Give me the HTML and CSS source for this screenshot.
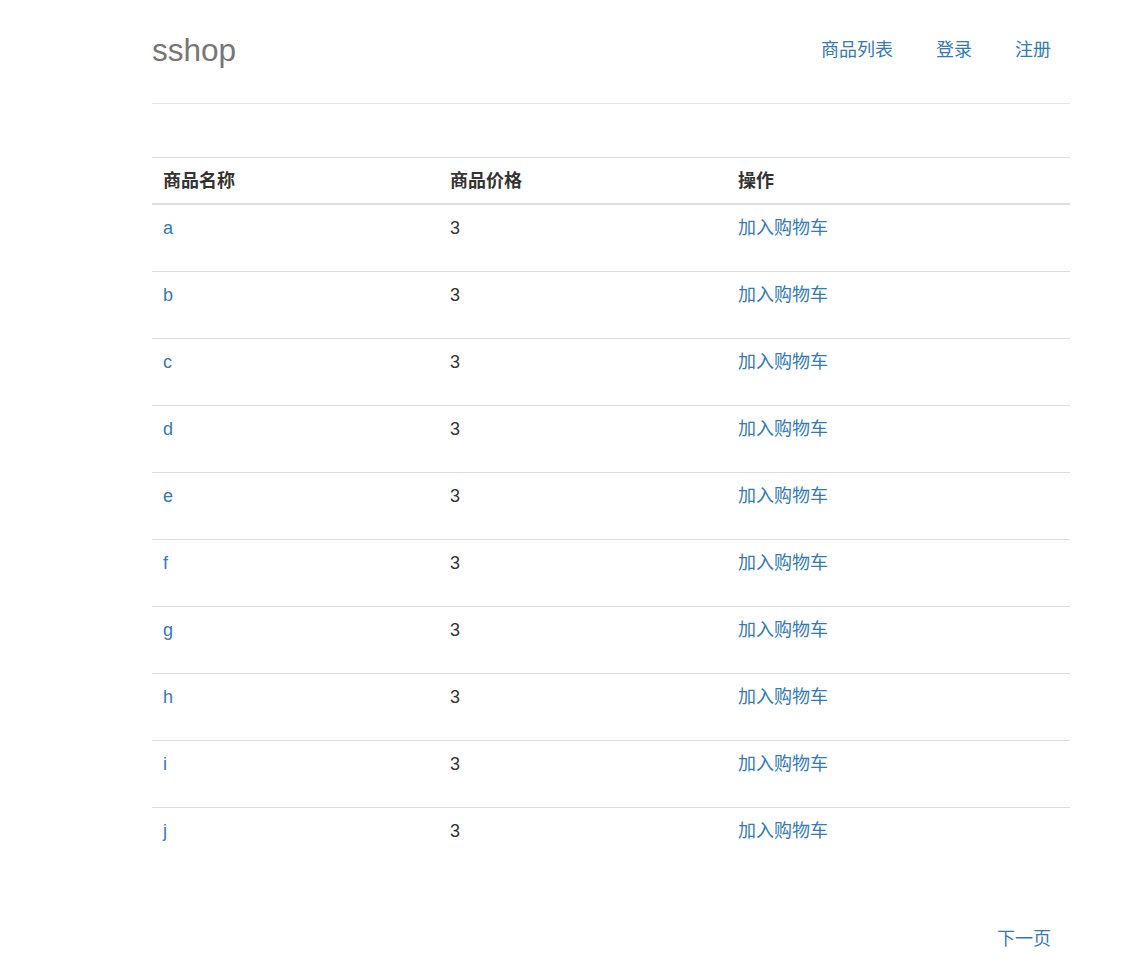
FILE: index.html
```html
<!DOCTYPE html>
<html lang="zh-CN">
<head>
<meta charset="utf-8">
<title>sshop</title>
<link rel="stylesheet" href="styles.css">
</head>
<body>
<div class="page">
  <header class="header">
    <h3 class="brand">sshop</h3>
    <ul class="nav">
      <li><a href="#">商品列表</a></li>
      <li><a href="#">登录</a></li>
      <li><a href="#">注册</a></li>
    </ul>
  </header>

  <table class="goods">
    <colgroup>
      <col class="c-name">
      <col class="c-price">
      <col class="c-op">
    </colgroup>
    <thead>
      <tr><th>商品名称</th><th>商品价格</th><th>操作</th></tr>
    </thead>
    <tbody>
      <tr><td><a href="#">a</a></td><td>3</td><td><a href="#">加入购物车</a></td></tr>
      <tr><td><a href="#">b</a></td><td>3</td><td><a href="#">加入购物车</a></td></tr>
      <tr><td><a href="#">c</a></td><td>3</td><td><a href="#">加入购物车</a></td></tr>
      <tr><td><a href="#">d</a></td><td>3</td><td><a href="#">加入购物车</a></td></tr>
      <tr><td><a href="#">e</a></td><td>3</td><td><a href="#">加入购物车</a></td></tr>
      <tr><td><a href="#">f</a></td><td>3</td><td><a href="#">加入购物车</a></td></tr>
      <tr><td><a href="#">g</a></td><td>3</td><td><a href="#">加入购物车</a></td></tr>
      <tr><td><a href="#">h</a></td><td>3</td><td><a href="#">加入购物车</a></td></tr>
      <tr><td><a href="#">i</a></td><td>3</td><td><a href="#">加入购物车</a></td></tr>
      <tr><td><a href="#">j</a></td><td>3</td><td><a href="#">加入购物车</a></td></tr>
    </tbody>
  </table>

  <nav class="pager">
    <a href="#">下一页</a>
  </nav>
</div>
</body>
</html>
```

FILE: styles.css
```css
html, body {
  margin: 0;
  padding: 0;
  background: #fff;
}

body {
  font-family: "Liberation Sans", Arial, "Noto Sans CJK SC", sans-serif;
  font-size: 18px;
  line-height: 25px;
  color: #333;
}

a {
  color: #337ab7;
  text-decoration: none;
}

.page {
  width: 918px;
  margin-left: 152px;
}

.header {
  display: flex;
  justify-content: space-between;
  align-items: center;
  padding: 25px 0 28px;
  border-bottom: 1px solid #e5e5e5;
}

.brand {
  margin: 0;
  font-size: 31.5px;
  font-weight: normal;
  line-height: 50px;
  color: #777;
}

.nav {
  display: flex;
  gap: 5px;
  list-style: none;
  margin: 0;
  padding: 0;
}

.nav a {
  display: block;
  padding: 12.5px 19px;
  line-height: 25px;
}

.goods {
  width: 100%;
  margin-top: 53px;
  border-collapse: separate;
  border-spacing: 0;
  table-layout: fixed;
}

.c-name { width: 287px; }
.c-price { width: 288px; }

.goods th,
.goods td {
  text-align: left;
  vertical-align: top;
  line-height: 25px;
}

.goods th {
  padding: 11px 11px 9px;
  font-weight: bold;
  border-top: 1px solid #ddd;
  border-bottom: 2px solid #ddd;
}

.goods td {
  padding: 11px 11px 30px;
  border-top: 1px solid #ddd;
}

.goods tbody tr:first-child td {
  border-top: 0;
}

.pager {
  display: flex;
  justify-content: flex-end;
  margin-top: 40px;
}

.pager a {
  display: block;
  padding: 12.5px 19px;
  line-height: 25px;
}
```
